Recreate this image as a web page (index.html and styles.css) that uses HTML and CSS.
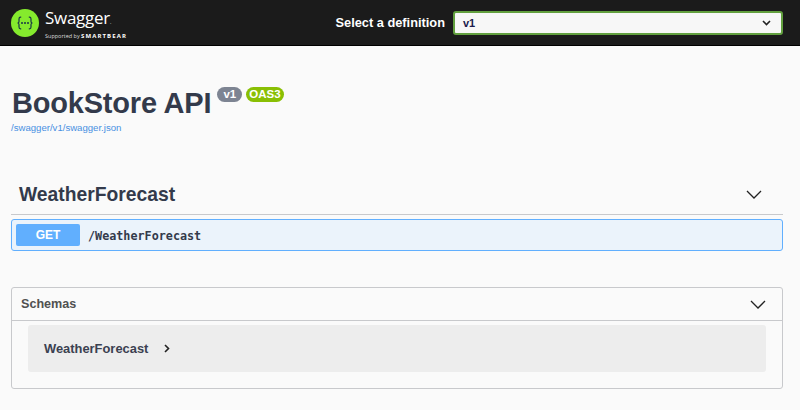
FILE: index.html
```html
<!DOCTYPE html>
<html lang="en">
<head>
    <meta charset="UTF-8">
    <meta name="viewport" content="width=device-width, initial-scale=1.0">
    <title>BookStore API</title>
    <link rel="stylesheet" href="styles.css">
</head>
<body>
    <header class="topbar">
        <div class="logo">
            <svg class="logo-mark" width="28" height="28" viewBox="0 0 28 28">
                <circle cx="14" cy="14" r="14" fill="#85ea2d"/>
                <path d="M10.2 8.2H9.6C8.4 8.2 8 8.9 8 10V12.4C8 13.3 7.5 13.8 6.6 14C7.5 14.2 8 14.7 8 15.6V18C8 19.1 8.4 19.8 9.6 19.8H10.2" fill="none" stroke="#173647" stroke-width="1.2"/>
                <path d="M17.8 8.2H18.4C19.6 8.2 20 8.9 20 10V12.4C20 13.3 20.5 13.8 21.4 14C20.5 14.2 20 14.7 20 15.6V18C20 19.1 19.6 19.8 18.4 19.8H17.8" fill="none" stroke="#173647" stroke-width="1.2"/>
                <circle cx="11" cy="14" r="1" fill="#173647"/>
                <circle cx="14" cy="14" r="1" fill="#173647"/>
                <circle cx="17" cy="14" r="1" fill="#173647"/>
            </svg>
            <div class="logo-text">
                <span class="logo-name">Swagger<small>.</small></span>
                <span class="logo-sub">Supported by <b>SMARTBEAR</b></span>
            </div>
        </div>
        <div class="definition">
            <span class="definition-label">Select a definition</span>
            <div class="definition-select">
                <span>v1</span>
                <svg width="9" height="6" viewBox="0 0 9 6"><path d="M1 1L4.500 4.500L8 1" fill="none" stroke="#222" stroke-width="1.6"/></svg>
            </div>
        </div>
    </header>

    <main class="container">
        <div class="info">
            <div class="title-row">
                <h1>BookStore API</h1>
                <span class="badge badge-version">v1</span>
                <span class="badge badge-oas">OAS3</span>
            </div>
            <a class="spec-link" href="#">/swagger/v1/swagger.json</a>
        </div>

        <div class="tag">
            <h2>WeatherForecast</h2>
            <svg width="16" height="9" viewBox="0 0 16 9"><path d="M1 1L8 8L15 1" fill="none" stroke="#222" stroke-width="1.3"/></svg>
        </div>
        <div class="opblock">
            <span class="method">GET</span>
            <span class="path">/WeatherForecast</span>
        </div>

        <section class="schemas">
            <div class="schemas-head">
                <h3>Schemas</h3>
                <svg width="16" height="9" viewBox="0 0 16 9"><path d="M1 1L8 8L15 1" fill="none" stroke="#222" stroke-width="1.3"/></svg>
            </div>
            <div class="schemas-body">
                <div class="model">
                    <span>WeatherForecast</span>
                    <svg width="6" height="9" viewBox="0 0 6 9"><path d="M1 1L4.500 4.500L1 8" fill="none" stroke="#222" stroke-width="1.6"/></svg>
                </div>
            </div>
        </section>
    </main>
</body>
</html>
```

FILE: styles.css
```css
body {
    font-family: "Liberation Sans", Arial, sans-serif;
    background-color: #fafafa;
    color: #3b4151;
    margin: 0;
    padding: 0;
    height: 410px;
    overflow: hidden;
}
.topbar {
    display: flex;
    justify-content: space-between;
    align-items: center;
    height: 45px;
    padding: 0 17px 0 11px;
    background-color: #1b1b1b;
    border-bottom: 1px solid #000;
}
.logo {
    display: flex;
    align-items: center;
    gap: 6px;
}
.logo-mark {
    display: block;
}
.logo-text {
    display: flex;
    flex-direction: column;
    color: #fff;
    margin-top: 3px;
}
.logo-name {
    font-family: "Open Sans", sans-serif;
    font-size: 17px;
    line-height: 21px;
    letter-spacing: -0.3px;
}
.logo-name small {
    font-size: 7px;
    color: #999;
}
.logo-sub {
    font-family: "Open Sans", sans-serif;
    font-size: 5.500px;
    line-height: 9px;
    color: #ddd;
    white-space: nowrap;
}
.logo-sub b {
    font-size: 6px;
    letter-spacing: 1.100px;
    color: #fff;
}
.definition {
    display: flex;
    align-items: center;
    gap: 8px;
}
.definition-label {
    color: #fff;
    font-size: 12.800px;
    font-weight: bold;
}
.definition-select {
    display: flex;
    justify-content: space-between;
    align-items: center;
    box-sizing: border-box;
    width: 330px;
    height: 24px;
    padding: 0 10px 0 8px;
    background-color: #f7f7f7;
    border: 2px solid #62a03f;
    border-radius: 3px;
    color: #1b1b4b;
    font-size: 11px;
    font-weight: bold;
}
.container {
    padding: 0 17px 0 11px;
}
.info {
    margin-top: 39px;
}
.title-row {
    display: flex;
    align-items: flex-start;
    height: 38px;
}
h1 {
    margin: 0 6px 0 1px;
    font-size: 29px;
    line-height: 37px;
    font-weight: bold;
    letter-spacing: -0.200px;
    color: #333a4b;
}
.badge {
    margin-top: 2px;
    margin-right: 4px;
    padding: 0 3px;
    height: 15px;
    border-radius: 8px;
    color: #fff;
    font-size: 11.500px;
    line-height: 15px;
    font-weight: bold;
}
.badge-version {
    box-sizing: border-box;
    width: 25px;
    text-align: center;
    background-color: #7d8492;
}
.badge-oas {
    background-color: #89bf04;
}
.spec-link {
    display: block;
    color: #4990e2;
    font-size: 9.600px;
    line-height: 12px;
    margin-top: -1px;
    text-decoration: none;
}
.tag {
    display: flex;
    justify-content: space-between;
    align-items: center;
    box-sizing: border-box;
    height: 40px;
    margin-top: 41px;
    padding: 0 21px 0 8px;
    border-bottom: 1px solid #c8c9cc;
}
h2 {
    margin: 1px 0 0;
    font-size: 19.300px;
    font-weight: bold;
    color: #333a4b;
}
.opblock {
    display: flex;
    align-items: center;
    gap: 8px;
    box-sizing: border-box;
    height: 32px;
    margin-top: 4px;
    padding: 0 4px;
    background-color: #ebf3fb;
    border: 1px solid #61affe;
    border-radius: 3px;
}
.method {
    box-sizing: border-box;
    width: 64px;
    height: 22px;
    background-color: #61affe;
    border-radius: 2px;
    color: #fff;
    font-size: 12px;
    line-height: 22px;
    font-weight: bold;
    text-align: center;
}
.path {
    margin-top: 1px;
    font-family: "DejaVu Sans Mono", monospace;
    font-size: 11.750px;
    font-weight: bold;
    color: #333a4b;
}
.schemas {
    box-sizing: border-box;
    height: 102px;
    margin-top: 36px;
    border: 1px solid #c8c9cc;
    border-radius: 3px;
}
.schemas-head {
    display: flex;
    justify-content: space-between;
    align-items: center;
    box-sizing: border-box;
    height: 33px;
    padding: 0 16px 0 9px;
    border-bottom: 1px solid #c8c9cc;
}
h3 {
    margin: 0;
    font-size: 12.600px;
    font-weight: bold;
    color: #505050;
}
.schemas-body {
    padding: 4px 16px;
}
.model {
    display: flex;
    align-items: center;
    gap: 16px;
    box-sizing: border-box;
    height: 47px;
    padding-left: 16px;
    background-color: #ededed;
    border-radius: 3px;
    font-size: 12.900px;
    font-weight: bold;
    color: #3b4151;
}
```
